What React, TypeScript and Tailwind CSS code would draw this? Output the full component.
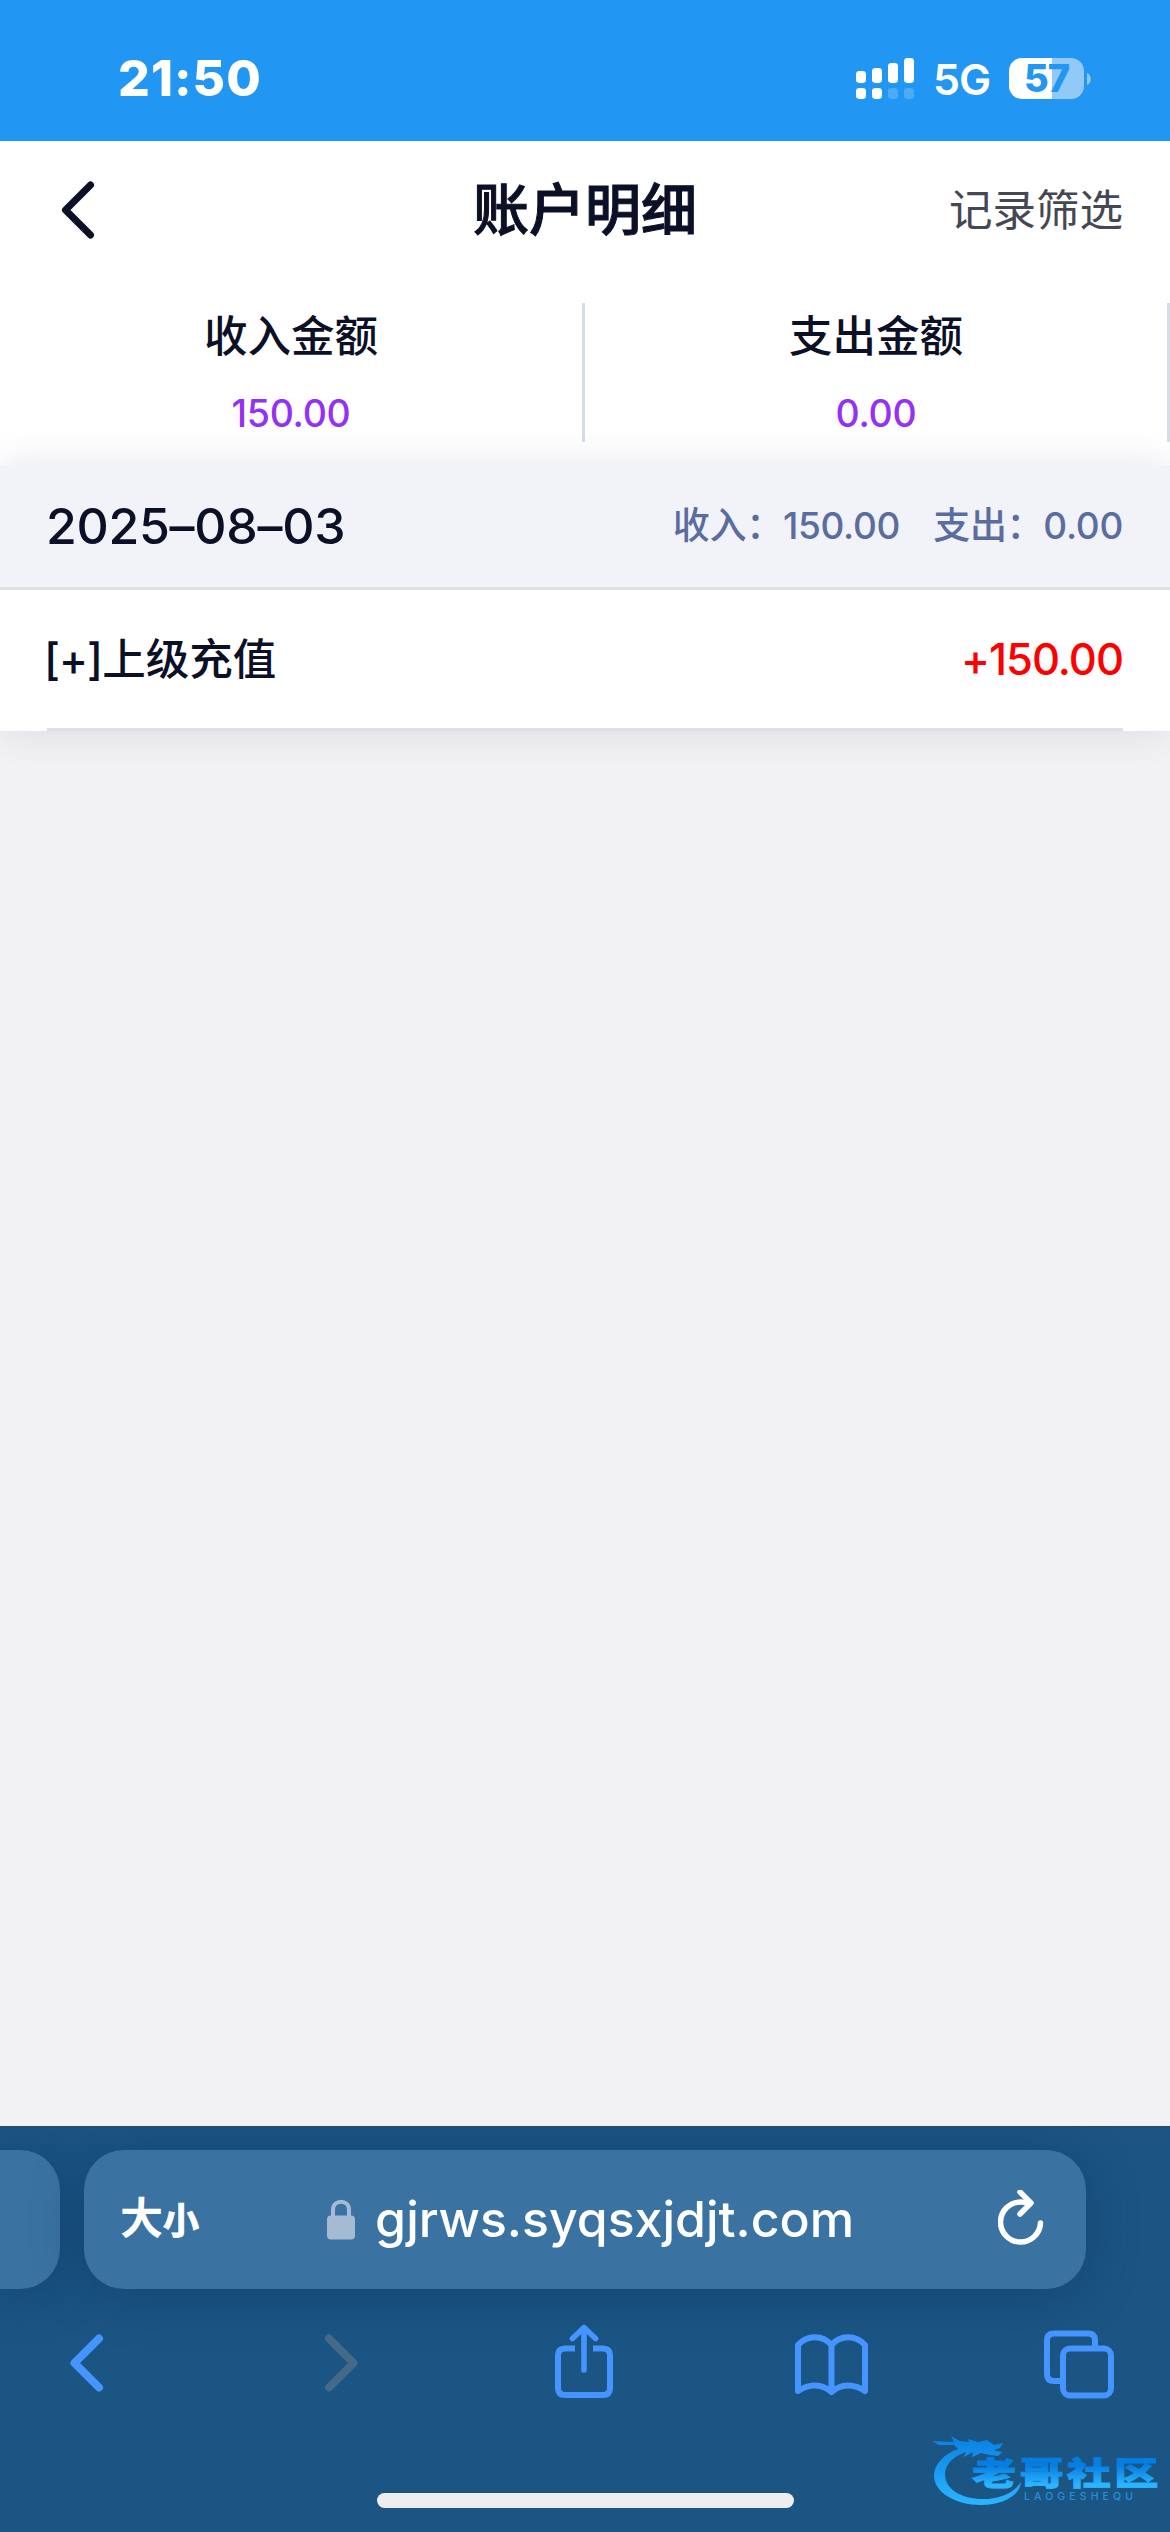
import React from "react";

const fontStack = "font-['Inter','Noto_Sans_CJK_SC',sans-serif]";

const summary = [
  { label: "收入金额", value: "150.00" },
  { label: "支出金额", value: "0.00" },
];

const days = [
  {
    date: "2025–08–03",
    income: "150.00",
    expense: "0.00",
    records: [{ title: "上级充值", sign: "+", amount: "150.00" }],
  },
];

function SignalIcon() {
  const bars = [
    { x: 0, y: 13, h: 12, dual: 1 },
    { x: 16, y: 10, h: 15, dual: 1 },
    { x: 32, y: 5, h: 20, dual: 0.2 },
    { x: 48, y: 0, h: 25, dual: 0.2 },
  ];
  return (
    <svg width="58" height="41" viewBox="0 0 58 41" fill="#fff">
      {bars.map((bar) => (
        <g key={bar.x}>
          <rect x={bar.x} y={bar.y} width="10" height={bar.h} rx="3.4" />
          <rect
            x={bar.x}
            y="30"
            width="10"
            height="11"
            rx="3.4"
            opacity={bar.dual}
          />
        </g>
      ))}
    </svg>
  );
}

function Battery() {
  return (
    <div className="flex items-center gap-[3px]">
      <div className="flex h-[41px] w-[75px] items-center justify-center rounded-[13px] bg-[linear-gradient(90deg,#fff_58%,#92c9f9_58%)]">
        <span className="text-[38px] leading-[41px] font-extrabold tracking-[-1px] text-[#2196f3]">
          57
        </span>
      </div>
      <svg width="4" height="12" viewBox="0 0 4 12">
        <path d="M0 0C5 2 5 10 0 12Z" fill="#92c9f9" />
      </svg>
    </div>
  );
}

function StatusBar() {
  return (
    <div className="flex h-[141px] items-start justify-between bg-[#2196f3] pr-[79px] pl-[118px] text-white">
      <span className="mt-[48px] text-[50px] leading-[60px] font-extrabold tracking-[1px]">
        21:50
      </span>
      <div className="mt-[57px] flex items-center">
        <SignalIcon />
        <span className="mt-[2px] ml-[19px] w-[58px] text-[43px] leading-[41px] font-semibold tracking-[-1px]">
          5G
        </span>
        <div className="ml-[18px]">
          <Battery />
        </div>
      </div>
    </div>
  );
}

function NavBar() {
  return (
    <div className="grid h-[138px] grid-cols-3 items-center bg-white px-[47px] text-[#0b1027]">
      <svg
        className="ml-[14px]"
        width="34"
        height="58"
        viewBox="0 0 34 58"
        fill="none"
        stroke="currentColor"
        strokeWidth="7"
        strokeLinecap="round"
        strokeLinejoin="round"
      >
        <path d="M29.5 4L4.5 29L29.5 54" />
      </svg>
      <h1 className="text-center text-[56px] leading-[80px] font-medium whitespace-nowrap [-webkit-text-stroke:1px_#0b1027]">
        账户明细
      </h1>
      <span className="text-right text-[43.5px] leading-[60px] text-[#454753]">
        记录筛选
      </span>
    </div>
  );
}

function Summary() {
  return (
    <div className="grid h-[186px] grid-cols-2 bg-white pt-[24px] text-center">
      {summary.map((item) => (
        <div
          key={item.label}
          className="h-[139px] border-r-[3px] border-[#d5dcea]"
        >
          <p className="pt-[3px] text-[43.5px] leading-[60px] font-medium text-[#0b1027]">
            {item.label}
          </p>
          <p className="mt-[22px] text-[37.5px] leading-[52px] font-[450] tracking-[-0.3px] text-[#9431f5]">
            {item.value}
          </p>
        </div>
      ))}
    </div>
  );
}

function DayGroup({ day }: { day: (typeof days)[number] }) {
  return (
    <section className="relative bg-white shadow-[0_0_36px_0_rgba(70,75,125,0.14)]">
      <header className="flex h-[125px] items-center justify-between border-b-[3px] border-[#e0e0e0] bg-[#f2f3f9] px-[47px]">
        <span className="-ml-px text-[50px] leading-[60px] font-medium tracking-[-0.3px] text-[#0b1027]">
          {day.date}
        </span>
        <div className="flex gap-[33px] text-[37px] leading-[52px] font-[450] tracking-[-0.3px] text-[#5b6c9f]">
          <span>收入：{day.income}</span>
          <span>支出：{day.expense}</span>
        </div>
      </header>
      {day.records.map((record) => (
        <div
          key={record.title}
          className="mx-[47px] flex h-[141px] items-center justify-between border-b-[3px] border-[#e0e0e0] text-[43.5px] leading-[60px] font-medium"
        >
          <span className="-ml-[3px] text-[#0b1027]">
            <span className="tracking-[-1px]">[{record.sign}]</span>
            {record.title}
          </span>
          <span className="tracking-[-1px] text-[#f00]">
            {record.sign}
            {record.amount}
          </span>
        </div>
      ))}
    </section>
  );
}

function AddressBar() {
  return (
    <div className="flex gap-[24px] pt-[23px]">
      <div className="h-[139px] w-[60px] rounded-r-[40px] bg-[#3a73a1] shadow-[0_6px_50px_rgba(10,50,90,0.45)]" />
      <div className="flex h-[139px] w-[1002px] items-center rounded-[40px] bg-[#3a73a1] pl-[36px] text-white shadow-[0_6px_50px_rgba(10,50,90,0.45)]">
        <span className="flex w-[84px] items-baseline font-bold">
          <span className="text-[43px] leading-[60px]">大</span>
          <span className="text-[36px] leading-[60px] [-webkit-text-stroke:1px_#fff]">
            小
          </span>
        </span>
        <svg
          className="ml-[123px]"
          width="28"
          height="41"
          viewBox="0 0 28 41"
          fill="none"
        >
          <rect y="16.5" width="28" height="24" rx="4" fill="#a5bad3" />
          <path
            d="M6 18V11C6 0 22 0 22 11V18"
            stroke="#a5bad3"
            strokeWidth="4"
          />
        </svg>
        <span className="mb-[1px] ml-[20px] w-[474px] text-[50px] leading-[60px] font-medium whitespace-nowrap">
          gjrws.syqsxjdjt.com
        </span>
        <svg
          className="mb-[3px] ml-[149px]"
          width="46"
          height="56"
          viewBox="0 0 46 56"
          fill="none"
          stroke="#fff"
          strokeWidth="5.5"
          strokeLinecap="round"
          strokeLinejoin="round"
        >
          <path d="M31 13.5C27 12 25 12 22.5 12A20 20 0 1 0 42.5 33" />
          <path d="M22 2L33 13L22 24" />
        </svg>
      </div>
    </div>
  );
}

function Toolbar() {
  const stroke = {
    fill: "none",
    stroke: "currentColor",
    strokeLinecap: "round" as const,
    strokeLinejoin: "round" as const,
  };
  return (
    <div className="mt-[35px] flex h-[76px] items-center text-[#4694ff]">
      <svg
        className="mt-[2px] ml-[69px]"
        width="35"
        height="58"
        viewBox="0 0 35 58"
        {...stroke}
        strokeWidth="8"
      >
        <path d="M30 4.5L5.5 29L30 53.5" />
      </svg>
      <svg
        className="mt-[2px] ml-[220px] text-[#456a88]"
        width="35"
        height="58"
        viewBox="0 0 35 58"
        {...stroke}
        strokeWidth="8"
      >
        <path d="M5 4.5L29.5 29L5 53.5" />
      </svg>
      <svg
        className="ml-[196px]"
        width="58"
        height="76"
        viewBox="0 0 58 76"
        {...stroke}
        strokeWidth="6"
      >
        <path
          d="M20 24.5H10Q3 24.5 3 31.5V64Q3 71 10 71H48Q55 71 55 64V31.5Q55 24.5 48 24.5H38"
          strokeLinecap="butt"
        />
        <path d="M29 46V4M17.5 14.5L29 3.5L40.5 14.5" strokeWidth="5.6" />
      </svg>
      <svg
        className="ml-[182px]"
        width="73"
        height="76"
        viewBox="0 0 73 76"
        {...stroke}
        strokeWidth="6"
      >
        <path d="M36.5 21C28 10.5 12 10.5 3 21V67C14 59.5 27 59.5 36.5 68C46 59.5 59 59.5 70 67V21C61 10.5 45 10.5 36.5 21V67" />
      </svg>
      <svg
        className="ml-[176px]"
        width="70"
        height="76"
        viewBox="0 0 70 76"
        {...stroke}
        strokeWidth="6"
        strokeLinecap="butt"
      >
        <rect x="19" y="24.5" width="48" height="47" rx="7" />
        <path d="M16 57H10Q3 57 3 50V16Q3 9.5 10 9.5H44Q51 9.5 51 16V22" />
      </svg>
    </div>
  );
}

function CommunityLogo() {
  return (
    <svg
      className="absolute right-[12px] bottom-[22px]"
      width="228"
      height="80"
      viewBox="0 0 228 80"
    >
      <defs>
        <linearGradient id="logo-ring" x1="0" y1="0" x2="0" y2="1">
          <stop offset="0" stopColor="#0a7fe3" />
          <stop offset="1" stopColor="#2cb5ff" />
        </linearGradient>
        <linearGradient id="logo-text" x1="0" y1="0" x2="0" y2="1">
          <stop offset="0.3" stopColor="#057ee2" />
          <stop offset="0.8" stopColor="#2cb5ff" />
        </linearGradient>
      </defs>
      {/* dragon curled into a ring, head at the top */}
      <path
        d="M28 19C14 24 4 34 4 46C4 62 25 75 51 75C72 75 90 66 91 52C84 63 69 69 53 69C31 69 15 59 15 44C15 34 24 26 36 22L34 27L43 22L42 27L51 23L60 25L68 26L72 22L64 20L70 18L73 13L64 15L57 10L48 12L38 9L39 12L30 11L21 6L24 12L2 11L9 15L24 15Z"
        fill="url(#logo-ring)"
      />
      <text
        transform="translate(42 55) scale(1.38 1)"
        textLength="135"
        fontSize="32"
        fontWeight="900"
        fill="url(#logo-text)"
        stroke="url(#logo-text)"
        strokeWidth="0.8"
      >
        老哥社区
      </text>
      <text
        x="94"
        y="70"
        textLength="109"
        fontSize="10.5"
        fontWeight="500"
        fill="#2590dd"
      >
        LAOGESHEQU
      </text>
    </svg>
  );
}

function BrowserChrome() {
  return (
    <footer className="relative h-[406px] overflow-hidden border-t border-[#31475c] bg-[#1b5583]">
      <AddressBar />
      <Toolbar />
      <div className="mx-auto mt-[93px] h-[15px] w-[417px] rounded-full bg-[#eee]" />
      <CommunityLogo />
    </footer>
  );
}

export default function App() {
  return (
    <div
      className={`flex h-[2532px] w-[1170px] flex-col overflow-hidden bg-[#f2f2f4] ${fontStack}`}
    >
      <StatusBar />
      <NavBar />
      <Summary />
      <main className="flex-1">
        {days.map((day) => (
          <DayGroup key={day.date} day={day} />
        ))}
      </main>
      <BrowserChrome />
    </div>
  );
}
